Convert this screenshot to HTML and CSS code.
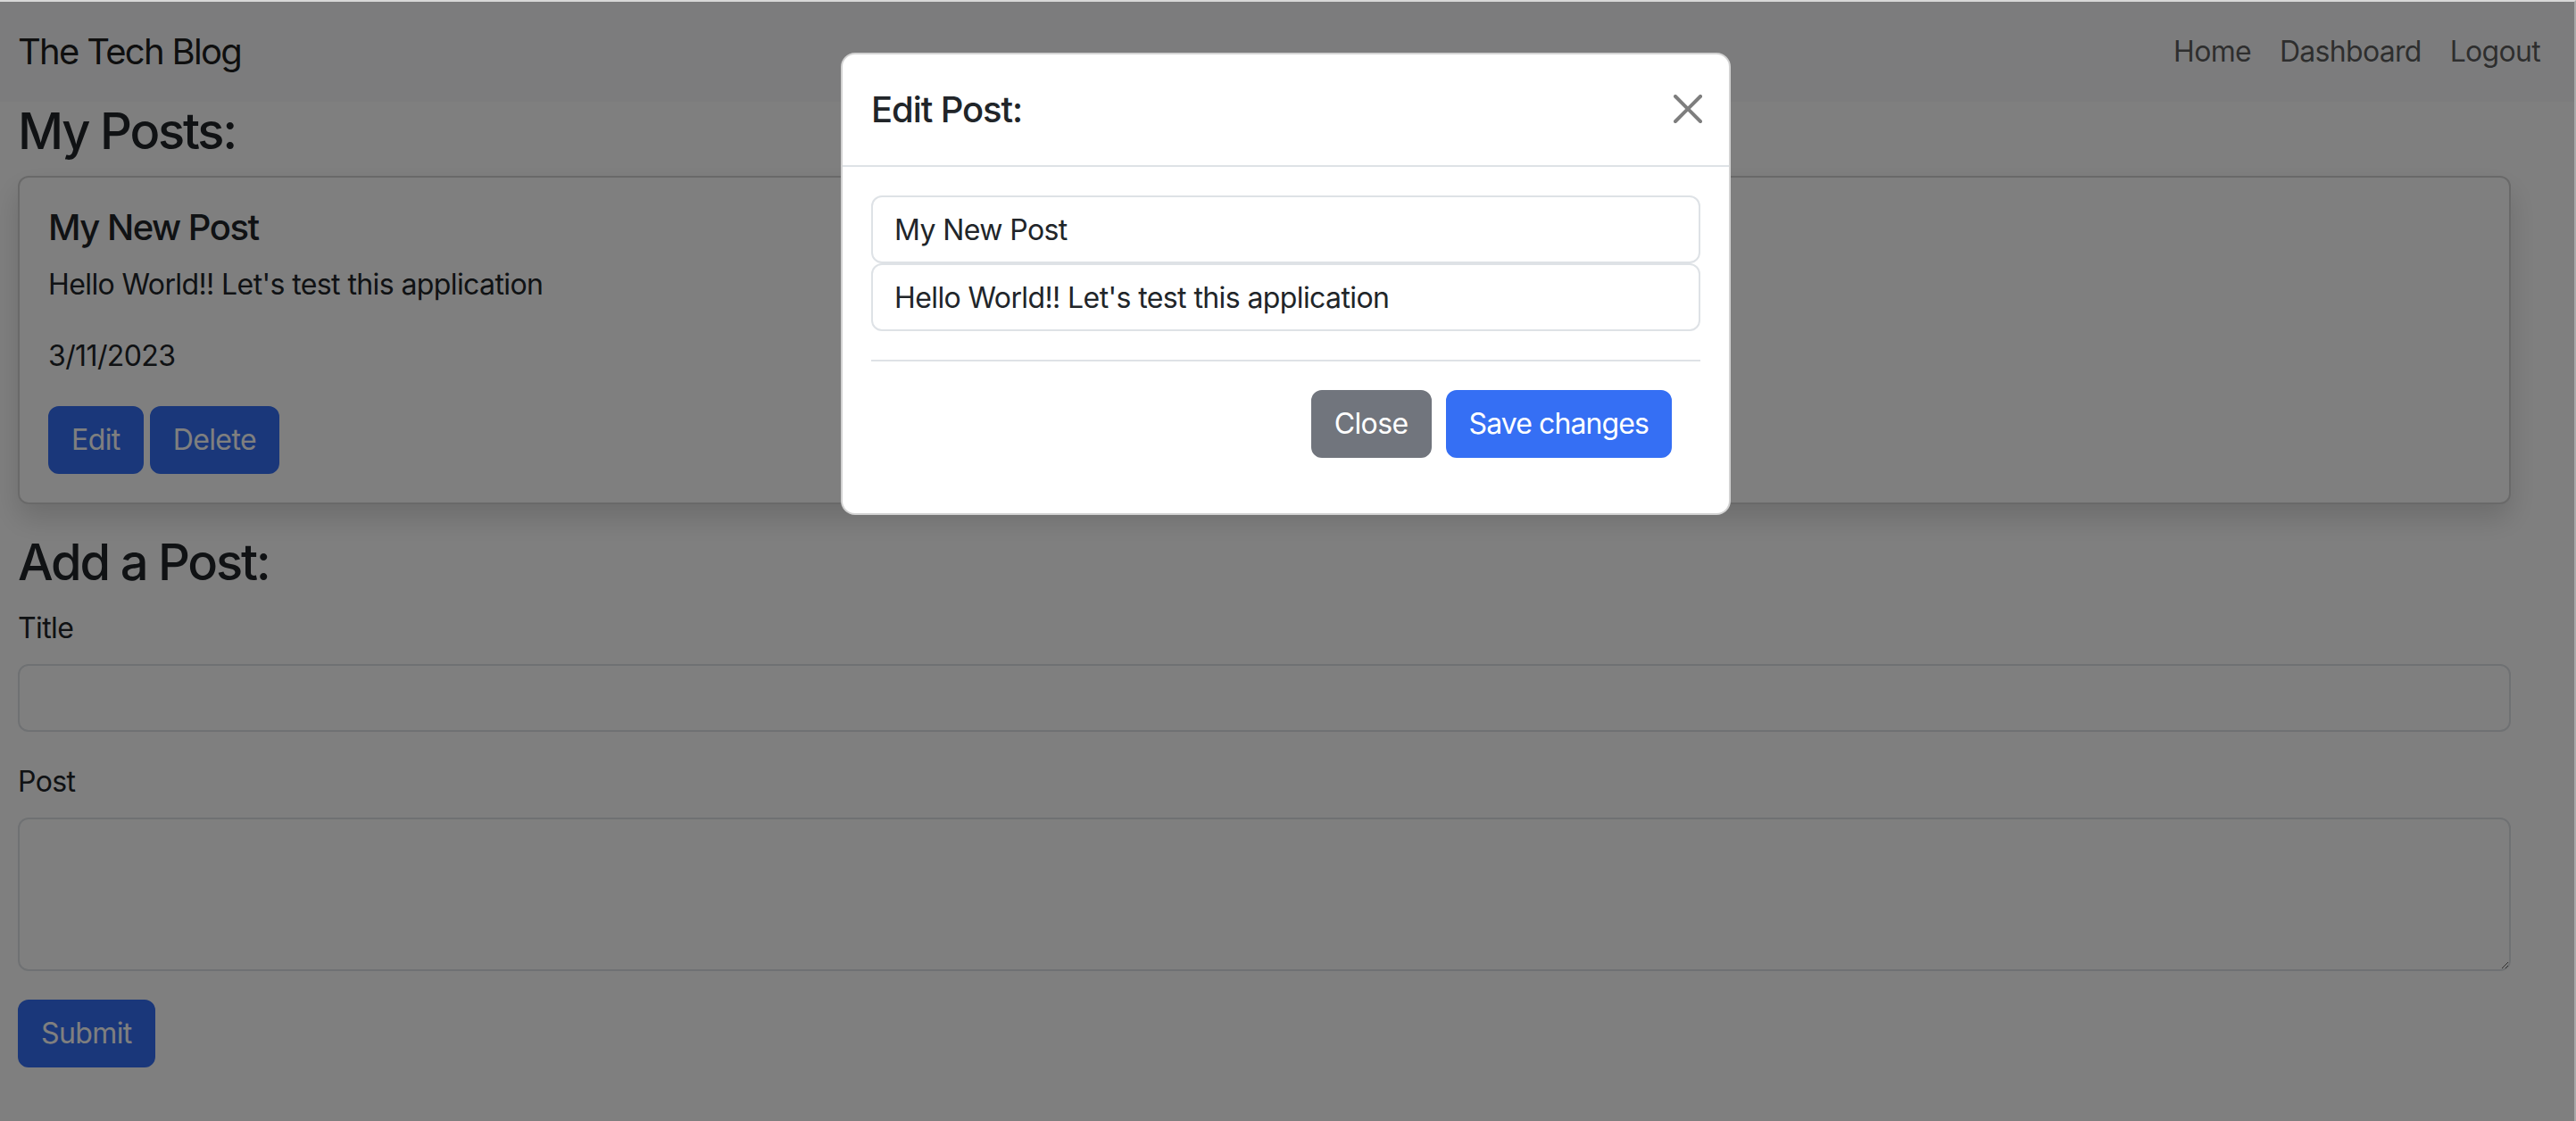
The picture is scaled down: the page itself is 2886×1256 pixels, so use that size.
FILE: index.html
```html
<!DOCTYPE html>
<html lang="en">
<head>
<meta charset="utf-8">
<title>The Tech Blog</title>
<link rel="stylesheet" href="styles.css">
</head>
<body>
<div class="frame">
  <div class="page">
    <nav class="navbar">
      <a class="brand">The Tech Blog</a>
      <div class="nav-links">
        <a class="nav-link">Home</a>
        <a class="nav-link">Dashboard</a>
        <a class="nav-link">Logout</a>
      </div>
    </nav>
    <main class="main">
      <h3 class="heading">My Posts:</h3>
      <div class="card">
        <h5 class="card-title">My New Post</h5>
        <p class="card-text">Hello World!! Let's test this application</p>
        <p class="card-text">3/11/2023</p>
        <div class="btn-row">
          <button class="btn btn-primary">Edit</button>
          <button class="btn btn-primary">Delete</button>
        </div>
      </div>
      <h3 class="heading">Add a Post:</h3>
      <form class="post-form">
        <label class="form-label">Title</label>
        <input class="form-control field" type="text">
        <label class="form-label">Post</label>
        <textarea class="form-control field area" rows="3"></textarea>
        <div><button class="btn btn-primary" type="button">Submit</button></div>
      </form>
    </main>
    <div class="backdrop"></div>
    <div class="modal">
      <div class="modal-header">
        <h5 class="modal-title">Edit Post:</h5>
        <span class="btn-close">
          <svg viewBox="0 0 16 16" width="32" height="32"><path d="M.293.293a1 1 0 0 1 1.414 0L8 6.586 14.293.293a1 1 0 1 1 1.414 1.414L9.414 8l6.293 6.293a1 1 0 0 1-1.414 1.414L8 9.414l-6.293 6.293a1 1 0 0 1-1.414-1.414L6.586 8 .293 1.707a1 1 0 0 1 0-1.414z"/></svg>
        </span>
      </div>
      <div class="modal-body">
        <input class="form-control" type="text" value="My New Post">
        <input class="form-control" type="text" value="Hello World!! Let's test this application">
        <div class="modal-footer">
          <button class="btn btn-secondary" type="button">Close</button>
          <button class="btn btn-primary btn-save" type="button">Save changes</button>
        </div>
      </div>
    </div>
  </div>
</div>
</body>
</html>
```

FILE: styles.css
```css
* { box-sizing: border-box; }
html, body { margin: 0; padding: 0; }
body {
  font-family: "Inter", "Liberation Sans", sans-serif;
  color: #212529;
  background: #a9a9a9;
  letter-spacing: -0.6px;
}
.frame {
  width: 2886px;
  height: 1256px;
  border-top: 2px solid #d8d8d8;
  border-right: 2px solid #a8a8a8;
  overflow: hidden;
}
.page {
  position: relative;
  width: 2884px;
  height: 1254px;
  background: #fff;
  overflow: hidden;
}
.navbar {
  height: 112px;
  background: #f8f9fa;
  display: flex;
  align-items: center;
  justify-content: space-between;
  padding: 0 22px 0 20px;
}
.brand {
  font-size: 40px;
  line-height: 60px;
  padding: 10px 0;
  color: rgba(0,0,0,.9);
  letter-spacing: -1.7px;
}
.nav-links { display: flex; }
.nav-link {
  font-size: 32px;
  line-height: 48px;
  padding: 16px 16px;
  color: rgba(0,0,0,.65);
  letter-spacing: -0.7px;
}
.main {
  padding: 0 71px 0 20px;
}
.heading {
  font-size: 56px;
  font-weight: 500;
  line-height: 1.2;
  margin: 0 0 16px;
  letter-spacing: -2.2px;
}
.card {
  border: 2px solid rgba(0,0,0,.175);
  border-radius: 12px;
  box-shadow: 0 16px 32px rgba(0,0,0,.15);
  padding: 32px;
  margin-bottom: 32px;
}
.card-title {
  font-size: 40px;
  font-weight: 500;
  line-height: 1.2;
  margin: 0 0 16px;
  letter-spacing: -1.5px;
}
.card-text {
  font-size: 32px;
  line-height: 1.5;
  margin: 0 0 32px;
}
.btn-row { display: flex; gap: 7px; }
.btn {
  font-family: inherit;
  font-size: 32px;
  line-height: 48px;
  padding: 12px 24px;
  border: 2px solid transparent;
  border-radius: 12px;
  color: #fff;
  letter-spacing: -0.6px;
  cursor: pointer;
}
.btn-primary { background: #356ff4; border-color: #356ff4; }
.btn-secondary { background: #71757d; border-color: #71757d; }
.btn-save { letter-spacing: -0.9px; }
.post-form { display: block; }
.form-label {
  display: block;
  font-size: 32px;
  line-height: 48px;
  margin-bottom: 16px;
}
.form-control {
  display: block;
  width: 100%;
  height: 76px;
  font-family: inherit;
  font-size: 32px;
  line-height: 48px;
  padding: 12px 24px;
  color: #212529;
  background: #fff;
  border: 2px solid #dee2e6;
  border-radius: 12px;
  outline: none;
  letter-spacing: -0.6px;
}
.field { margin-bottom: 32px; }
.area { height: 172px; resize: vertical; }
.backdrop {
  position: absolute;
  inset: 0;
  background: rgba(0,0,0,.5);
}
.modal {
  position: absolute;
  left: 942px;
  top: 57px;
  width: 997px;
  background: #fff;
  border: 2px solid rgba(0,0,0,.175);
  border-radius: 16px;
}
.modal-header {
  display: flex;
  align-items: center;
  justify-content: space-between;
  padding: 32px;
  border-bottom: 2px solid #dee2e6;
}
.modal-title {
  margin: 0;
  font-size: 40px;
  line-height: 60px;
  font-weight: 500;
  letter-spacing: -1.1px;
}
.btn-close {
  display: block;
  width: 32px;
  height: 32px;
  margin-right: -2px;
  margin-top: -3px;
  opacity: .5;
}
.btn-close svg { display: block; fill: #000; }
.modal-body {
  padding: 32px 32px 30px;
}
.modal-footer {
  margin-top: 32px;
  border-top: 2px solid #dee2e6;
  padding: 24px;
  display: flex;
  justify-content: flex-end;
}
.modal-footer .btn { margin: 8px; }
```
